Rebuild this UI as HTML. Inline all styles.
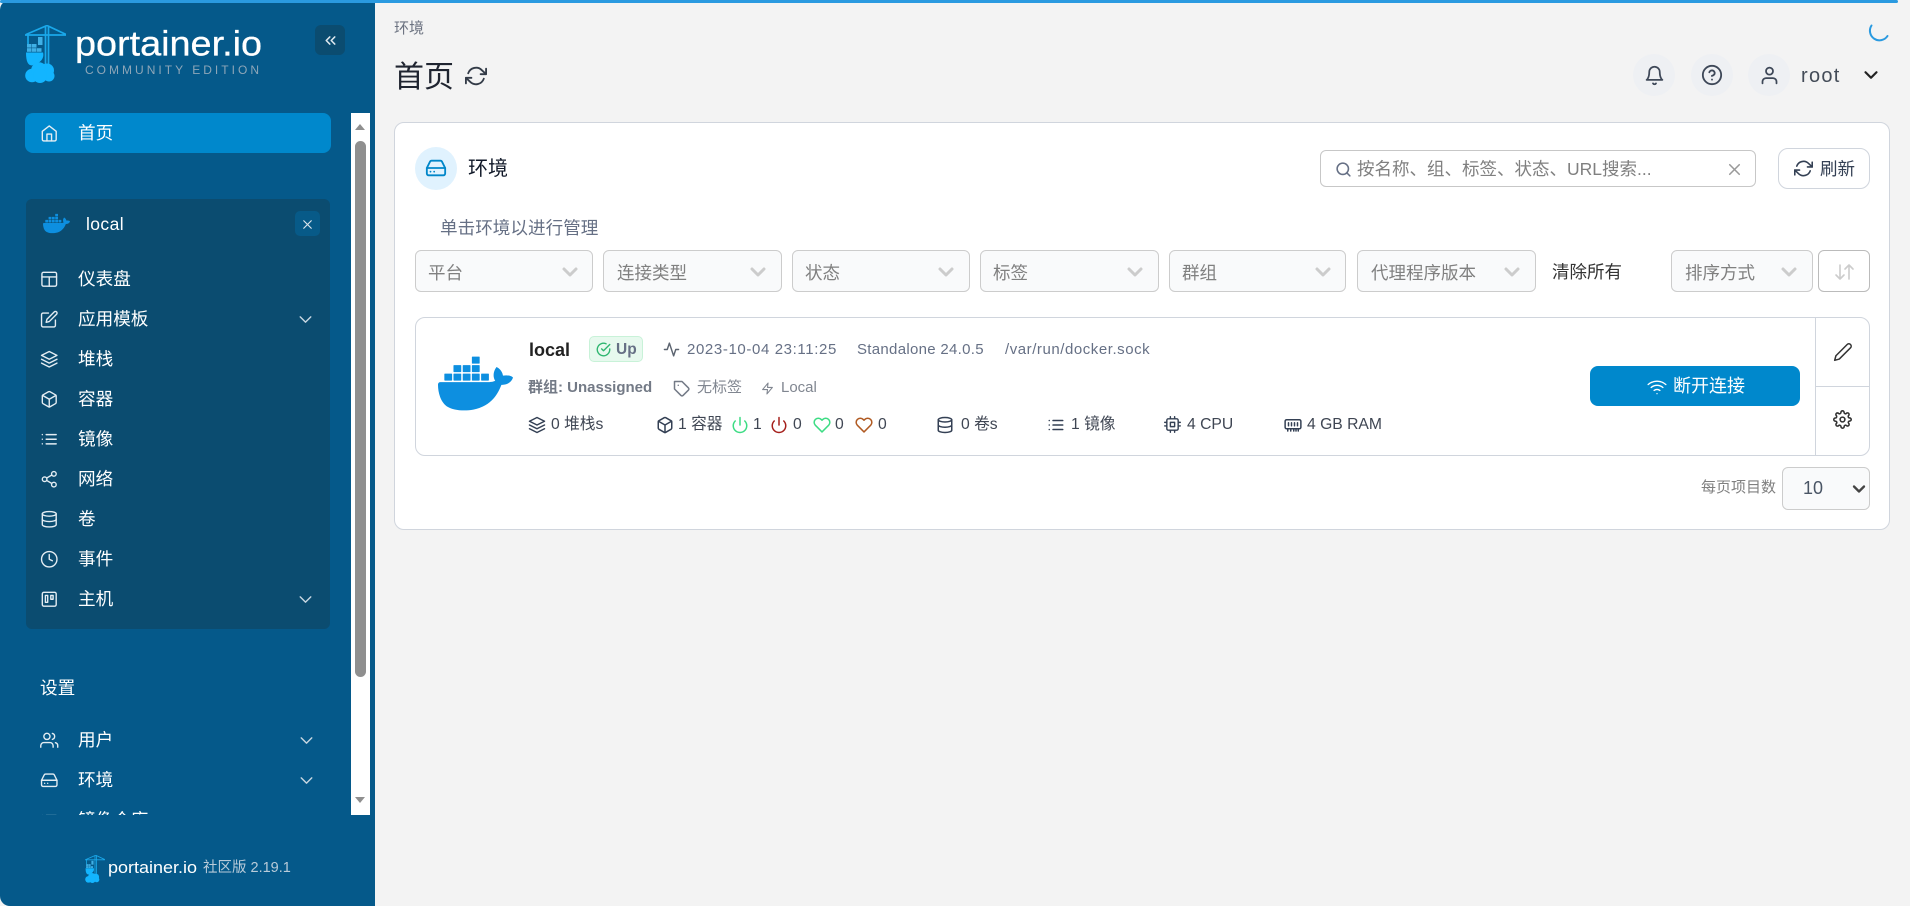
<!DOCTYPE html>
<html lang="zh"><head><meta charset="utf-8"><title>Portainer</title>
<style>
html,body{margin:0;padding:0;width:1910px;height:906px;overflow:hidden;background:#f3f3f3;font-family:"Liberation Sans","Noto Sans CJK SC",sans-serif;}
.t{position:absolute;line-height:24px;white-space:nowrap;}
.b{position:absolute;box-sizing:border-box;}
svg.i{position:absolute;fill:none;stroke:currentColor;stroke-width:2;stroke-linecap:round;stroke-linejoin:round;overflow:visible;}
.w{color:#fff;font-size:17.6px;left:78px;}
svg.n{color:#e4edf3;width:18.5px;height:18.500px;left:40px;margin-top:-1.250px;stroke-width:1.800;}
svg.c{color:#c6d5e0;width:21px;height:21px;left:295px;margin-top:-2.500px;stroke-width:1.700;}
.f{top:250px;height:42px;background:#f9fafb;border:1px solid #ccc;border-radius:6px;}
.ft{color:#808080;font-size:17.5px;top:261px;}
svg.fc{color:#ccc;width:24px;height:24px;top:260px;stroke-width:3;}
.g{color:#667085;font-size:15px;}
.d{color:#3f4653;font-size:15.7px;top:413px;}
svg.di{width:18px;height:18px;top:416px;color:#344054;stroke-width:2;}
.circ{top:54px;height:42px;width:42px;border-radius:50%;background:#eef0f3;}
</style></head><body>
<svg width="0" height="0" style="position:absolute">
<defs>
<symbol id="home" viewBox="0 0 24 24"><path d="M3 9.500l9-7 9 7V20a2 2 0 0 1-2 2H5a2 2 0 0 1-2-2z"/><path d="M9 22v-9h6v9"/></symbol>
<symbol id="layout" viewBox="0 0 24 24"><rect x="2.500" y="3" width="19" height="18" rx="2"/><path d="M2.500 9h19M12 9v12"/></symbol>
<symbol id="edit" viewBox="0 0 24 24"><path d="M11 4H4a2 2 0 0 0-2 2v14a2 2 0 0 0 2 2h14a2 2 0 0 0 2-2v-7"/><path d="M18.500 2.500a2.121 2.121 0 0 1 3 3L12 15l-4 1 1-4 9.500-9.500z"/></symbol>
<symbol id="layers" viewBox="0 0 24 24"><path d="M12 2L2 7l10 5 10-5z"/><path d="M2 17l10 5 10-5M2 12l10 5 10-5"/></symbol>
<symbol id="box" viewBox="0 0 24 24"><path d="M21 16V8a2 2 0 0 0-1-1.730l-7-4a2 2 0 0 0-2 0l-7 4A2 2 0 0 0 3 8v8a2 2 0 0 0 1 1.730l7 4a2 2 0 0 0 2 0l7-4A2 2 0 0 0 21 16z"/><path d="M3.270 6.960L12 12.010l8.730-5.050M12 22.080V12"/></symbol>
<symbol id="list" viewBox="0 0 24 24"><path d="M8 6h13M8 12h13M8 18h13M3 6h.01M3 12h.01M3 18h.01"/></symbol>
<symbol id="share" viewBox="0 0 24 24"><circle cx="18" cy="5" r="3"/><circle cx="6" cy="12" r="3"/><circle cx="18" cy="19" r="3"/><path d="M8.590 13.510l6.830 3.980M15.410 6.510l-6.820 3.980"/></symbol>
<symbol id="db" viewBox="0 0 24 24"><ellipse cx="12" cy="5" rx="9" ry="3"/><path d="M21 12c0 1.660-4 3-9 3s-9-1.340-9-3"/><path d="M3 5v14c0 1.660 4 3 9 3s9-1.340 9-3V5"/></symbol>
<symbol id="clock" viewBox="0 0 24 24"><circle cx="12" cy="12" r="10"/><path d="M12 6v6l4 2"/></symbol>
<symbol id="trello" viewBox="0 0 24 24"><rect x="3" y="3" width="18" height="18" rx="2"/><rect x="7" y="7" width="3" height="9"/><rect x="14" y="7" width="3" height="5"/></symbol>
<symbol id="users" viewBox="0 0 24 24"><path d="M17 21v-2a4 4 0 0 0-4-4H5a4 4 0 0 0-4 4v2"/><circle cx="9" cy="7" r="4"/><path d="M23 21v-2a4 4 0 0 0-3-3.870M16 3.130a4 4 0 0 1 0 7.750"/></symbol>
<symbol id="drive" viewBox="0 0 24 24"><path d="M22 12H2"/><path d="M5.450 5.110L2 12v6a2 2 0 0 0 2 2h16a2 2 0 0 0 2-2v-6l-3.450-6.890A2 2 0 0 0 16.760 4H7.240a2 2 0 0 0-1.790 1.110z"/><path d="M6 16h.01M10 16h.01"/></symbol>
<symbol id="chev" viewBox="0 0 24 24"><path d="M6 9l6 6 6-6"/></symbol>
<symbol id="chevl" viewBox="0 0 24 24"><path d="M11 17l-5-5 5-5M18 17l-5-5 5-5"/></symbol>
<symbol id="x" viewBox="0 0 24 24"><path d="M18 6L6 18M6 6l12 12"/></symbol>
<symbol id="refresh" viewBox="0 0 24 24"><path d="M23 4v6h-6M1 20v-6h6"/><path d="M3.510 9a9 9 0 0 1 14.850-3.360L23 10M1 14l4.640 4.360A9 9 0 0 0 20.490 15"/></symbol>
<symbol id="bell" viewBox="0 0 24 24"><path d="M18 8A6 6 0 0 0 6 8c0 7-3 9-3 9h18s-3-2-3-9"/><path d="M13.730 21a2 2 0 0 1-3.460 0"/></symbol>
<symbol id="help" viewBox="0 0 24 24"><circle cx="12" cy="12" r="10"/><path d="M9.090 9a3 3 0 0 1 5.830 1c0 2-3 3-3 3M12 17h.01"/></symbol>
<symbol id="user" viewBox="0 0 24 24"><path d="M20 21v-2a4 4 0 0 0-4-4H8a4 4 0 0 0-4 4v2"/><circle cx="12" cy="7" r="4"/></symbol>
<symbol id="search" viewBox="0 0 24 24"><circle cx="11" cy="11" r="8"/><path d="M21 21l-4.350-4.350"/></symbol>
<symbol id="check" viewBox="0 0 24 24"><path d="M22 11.080V12a10 10 0 1 1-5.930-9.140"/><path d="M22 4L12 14.010l-3-3"/></symbol>
<symbol id="pulse" viewBox="0 0 24 24"><path d="M22 12h-4l-3 9L9 3l-3 9H2"/></symbol>
<symbol id="tag" viewBox="0 0 24 24"><path d="M20.590 13.410l-7.170 7.170a2 2 0 0 1-2.830 0L2 12V2h10l8.590 8.590a2 2 0 0 1 0 2.820z"/><path d="M7 7h.01"/></symbol>
<symbol id="zap" viewBox="0 0 24 24"><path d="M13 2L3 14h9l-1 8 10-12h-9z"/></symbol>
<symbol id="power" viewBox="0 0 24 24"><path d="M18.360 6.640a9 9 0 1 1-12.730 0M12 2v10"/></symbol>
<symbol id="heart" viewBox="0 0 24 24"><path d="M20.840 4.610a5.500 5.500 0 0 0-7.780 0L12 5.670l-1.060-1.060a5.500 5.500 0 0 0-7.780 7.780l1.060 1.060L12 21.230l7.780-7.780 1.060-1.060a5.500 5.500 0 0 0 0-7.780z"/></symbol>
<symbol id="cpu" viewBox="0 0 24 24"><rect x="4" y="4" width="16" height="16" rx="2"/><rect x="9" y="9" width="6" height="6"/><path d="M9 1v3M15 1v3M9 20v3M15 20v3M20 9h3M20 14h3M1 9h3M1 14h3"/></symbol>
<symbol id="ram" viewBox="0 0 24 24"><rect x="1.500" y="5" width="21" height="12" rx="2"/><path d="M6 9v4M10 9v4M14 9v4M18 9v4M5 17v3M9 17v3M13 17v3M16 17v3M19 17v3"/></symbol>
<symbol id="wifi" viewBox="0 0 24 24"><path d="M5 12.550a11 11 0 0 1 14.080 0M1.420 9a16 16 0 0 1 21.160 0M8.530 16.110a6 6 0 0 1 6.950 0M12 20h.01"/></symbol>
<symbol id="pen" viewBox="0 0 24 24"><path d="M17 3a2.828 2.828 0 1 1 4 4L7.500 20.500 2 22l1.500-5.500L17 3z"/></symbol>
<symbol id="gear" viewBox="0 0 24 24"><circle cx="12" cy="12" r="3"/><path d="M19.400 15a1.650 1.650 0 0 0 .33 1.820l.06.06a2 2 0 0 1 0 2.830 2 2 0 0 1-2.830 0l-.06-.06a1.650 1.650 0 0 0-1.820-.33 1.650 1.650 0 0 0-1 1.510V21a2 2 0 0 1-2 2 2 2 0 0 1-2-2v-.09A1.650 1.650 0 0 0 9 19.400a1.650 1.650 0 0 0-1.820.33l-.06.06a2 2 0 0 1-2.830 0 2 2 0 0 1 0-2.830l.06-.06a1.650 1.650 0 0 0 .33-1.820 1.650 1.650 0 0 0-1.510-1H3a2 2 0 0 1-2-2 2 2 0 0 1 2-2h.09A1.650 1.650 0 0 0 4.600 9a1.650 1.650 0 0 0-.33-1.820l-.06-.06a2 2 0 0 1 0-2.830 2 2 0 0 1 2.830 0l.06.06a1.650 1.650 0 0 0 1.820.33H9a1.650 1.650 0 0 0 1-1.510V3a2 2 0 0 1 2-2 2 2 0 0 1 2 2v.09a1.650 1.650 0 0 0 1 1.510 1.650 1.650 0 0 0 1.820-.33l.06-.06a2 2 0 0 1 2.830 0 2 2 0 0 1 0 2.830l-.06.06a1.650 1.650 0 0 0-.33 1.820V9a1.650 1.650 0 0 0 1.510 1H21a2 2 0 0 1 2 2 2 2 0 0 1-2 2h-.09a1.650 1.650 0 0 0-1.510 1z"/></symbol>
<symbol id="docker" viewBox="0 0 24 24"><path fill="#0d8fe0" stroke="none" d="M13.983 11.078h2.119a.186.186 0 00.186-.185V9.006a.186.186 0 00-.186-.186h-2.119a.185.185 0 00-.185.185v1.888c0 .102.083.185.185.185m-2.954-5.430h2.118a.186.186 0 00.186-.186V3.574a.186.186 0 00-.186-.185h-2.118a.185.185 0 00-.185.185v1.888c0 .102.082.185.185.185m0 2.716h2.118a.187.187 0 00.186-.186V6.290a.186.186 0 00-.186-.185h-2.118a.185.185 0 00-.185.185v1.887c0 .102.082.185.185.186m-2.930 0h2.120a.186.186 0 00.184-.186V6.290a.185.185 0 00-.185-.185H8.100a.185.185 0 00-.185.185v1.887c0 .102.083.185.185.186m-2.964 0h2.119a.186.186 0 00.185-.186V6.290a.185.185 0 00-.185-.185H5.136a.186.186 0 00-.186.185v1.887c0 .102.084.185.186.186m5.893 2.715h2.118a.186.186 0 00.186-.185V9.006a.186.186 0 00-.186-.186h-2.118a.185.185 0 00-.185.185v1.888c0 .102.082.185.185.185m-2.930 0h2.120a.185.185 0 00.184-.185V9.006a.185.185 0 00-.184-.186h-2.120a.185.185 0 00-.184.185v1.888c0 .102.083.185.185.185m-2.964 0h2.119a.185.185 0 00.185-.185V9.006a.185.185 0 00-.184-.186h-2.120a.186.186 0 00-.186.186v1.887c0 .102.084.185.186.185m-2.920 0h2.120a.185.185 0 00.184-.185V9.006a.185.185 0 00-.184-.186h-2.120a.185.185 0 00-.184.185v1.888c0 .102.082.185.185.185M23.763 9.890c-.065-.051-.672-.510-1.954-.510-.338.001-.676.030-1.010.087-.248-1.700-1.653-2.530-1.716-2.566l-.344-.199-.226.327c-.284.438-.490.922-.612 1.430-.230.970-.090 1.882.403 2.661-.595.332-1.550.413-1.744.420H.751a.751.751 0 00-.750.748 11.376 11.376 0 00.692 4.062c.545 1.428 1.355 2.480 2.410 3.124 1.180.723 3.100 1.137 5.275 1.137.983.003 1.963-.086 2.930-.266a12.248 12.248 0 003.823-1.389c.980-.567 1.860-1.288 2.610-2.136 1.252-1.418 1.998-2.997 2.553-4.400h.221c1.372 0 2.215-.549 2.680-1.009.309-.293.550-.650.707-1.046l.098-.288Z"/></symbol>
<symbol id="logo" viewBox="25 25 41 58">
<g fill="none" stroke="#1aa8ea" stroke-width="1.700"><path d="M25 35h41M26 34.500L47 25.500L66 34.500M28 35v9M45.500 26v38M48.500 26v38"/></g>
<g fill="#3fb0e6"><rect x="27" y="44" width="4.500" height="3.600"/><rect x="32" y="44" width="4.500" height="3.600"/><rect x="27" y="48.200" width="4.500" height="3.600"/><rect x="32" y="48.200" width="4.500" height="3.600"/><rect x="37" y="48.200" width="4.500" height="3.600"/><rect x="38" y="37" width="4.500" height="8"/></g>
<path fill="#13b5ff" d="M26 52.500h17c1.500 5-2 10-7 11l-4 2c-4 0-6-4-6-13z"/>
<g fill="#13b5ff"><circle cx="32" cy="75.500" r="6.800"/><circle cx="39" cy="70" r="7.800"/><circle cx="47" cy="70.500" r="7"/><circle cx="49" cy="76" r="5.500"/><circle cx="40" cy="76" r="7"/></g>
</symbol>
</defs></svg>

<!-- sidebar -->
<div class="b" style="left:0;top:0;width:375px;height:906px;background:#05598a;border-radius:10px 0 0 10px"></div>
<div class="b" style="left:0;top:0;width:1898px;height:3px;background:#2a9ae0;border-radius:2px"></div>
<svg style="position:absolute;left:25px;top:25px;width:41px;height:58px"><use href="#logo"/></svg>
<svg style="position:absolute;left:0;top:0;width:375px;height:100px"><text x="75" y="55.500" font-family="Liberation Sans,sans-serif" font-size="35" fill="#fff" stroke="#fff" stroke-width=".3" textLength="187" lengthAdjust="spacingAndGlyphs">portainer.io</text><text x="85" y="74" font-family="Liberation Sans,sans-serif" font-size="12" fill="#8ea6b8" textLength="174">COMMUNITY EDITION</text></svg>
<div class="b" style="left:315px;top:25px;width:30px;height:30px;background:#0b4c70;border-radius:6px"></div>
<svg class="i" style="left:321.500px;top:31.500px;width:17px;height:17px;color:#dfe8ee;stroke-width:2.200"><use href="#chevl"/></svg>

<div class="b" style="left:25px;top:113px;width:306px;height:40px;background:#0088cc;border-radius:8px"></div>
<svg class="i n" style="top:125px"><use href="#home"/></svg><div class="t w" style="top:121px">首页</div>

<div class="b" style="left:26px;top:199px;width:304px;height:430px;background:#0b4c70;border-radius:6px"></div>
<svg style="position:absolute;left:43px;top:210px;width:27px;height:27px"><use href="#docker"/></svg>
<div class="t" style="left:86px;top:212px;color:#fff;font-size:17.5px;letter-spacing:.4px">local</div>
<div class="b" style="left:295px;top:211px;width:25px;height:25px;background:#075a88;border-radius:5px"></div>
<svg class="i" style="left:300px;top:216.500px;width:15px;height:15px;color:#dbe5ec;stroke-width:1.900"><use href="#x"/></svg>

<svg class="i n" style="top:271px"><use href="#layout"/></svg><div class="t w" style="top:267px">仪表盘</div>
<svg class="i n" style="top:311px"><use href="#edit"/></svg><div class="t w" style="top:307px">应用模板</div><svg class="i c" style="top:311px"><use href="#chev"/></svg>
<svg class="i n" style="top:351px"><use href="#layers"/></svg><div class="t w" style="top:347px">堆栈</div>
<svg class="i n" style="top:391px"><use href="#box"/></svg><div class="t w" style="top:387px">容器</div>
<svg class="i n" style="top:431px"><use href="#list"/></svg><div class="t w" style="top:427px">镜像</div>
<svg class="i n" style="top:471px"><use href="#share"/></svg><div class="t w" style="top:467px">网络</div>
<svg class="i n" style="top:511px"><use href="#db"/></svg><div class="t w" style="top:507px">卷</div>
<svg class="i n" style="top:551px"><use href="#clock"/></svg><div class="t w" style="top:547px">事件</div>
<svg class="i n" style="top:591px"><use href="#trello"/></svg><div class="t w" style="top:587px">主机</div><svg class="i c" style="top:591px"><use href="#chev"/></svg>

<div class="t w" style="left:40px;top:676px">设置</div>
<svg class="i n" style="top:732px"><use href="#users"/></svg><div class="t w" style="top:728px">用户</div><svg class="i c" style="left:296px;top:732px"><use href="#chev"/></svg>
<svg class="i n" style="top:772px"><use href="#drive"/></svg><div class="t w" style="top:768px">环境</div><svg class="i c" style="left:296px;top:772px"><use href="#chev"/></svg>
<div style="position:absolute;left:30px;top:800px;width:310px;height:15px;overflow:hidden"><div class="t w" style="left:48px;top:8px">镜像仓库</div><svg class="i n" style="left:10px;top:12px"><use href="#list"/></svg></div>

<div class="b" style="left:351px;top:113px;width:19px;height:702px;background:#fff"></div>
<div class="b" style="left:355px;top:141px;width:11px;height:536px;background:#8f8f8f;border-radius:6px"></div>
<div class="b" style="left:355px;top:124px;width:0;height:0;border-left:5.500px solid transparent;border-right:5.500px solid transparent;border-bottom:6px solid #8f8f8f"></div>
<div class="b" style="left:355px;top:797px;width:0;height:0;border-left:5.500px solid transparent;border-right:5.500px solid transparent;border-top:6px solid #8f8f8f"></div>

<svg style="position:absolute;left:85px;top:855px;width:20px;height:28px"><use href="#logo"/></svg>
<svg style="position:absolute;left:100px;top:850px;width:110px;height:40px"><text x="8" y="23" font-family="Liberation Sans,sans-serif" font-size="17" fill="#fff" textLength="89" lengthAdjust="spacingAndGlyphs">portainer.io</text></svg>
<div class="t" style="left:203px;top:856px;color:#b9cbd9;font-size:14.500px">社区版 2.19.1</div>

<!-- header -->
<div class="t" style="left:394px;top:17px;color:#6b7280;font-size:15px">环境</div>
<div class="t" style="left:394px;top:62px;color:#1f2430;font-size:30px;line-height:32px">首页</div>
<svg class="i" style="left:465px;top:65px;width:22px;height:22px;color:#333b47"><use href="#refresh"/></svg>

<svg style="position:absolute;left:1869px;top:22px;width:20px;height:20px;overflow:visible"><path d="M2.500 3.500A9.500 9.500 0 0 0 18.500 14" fill="none" stroke="#2a9ae0" stroke-width="2" stroke-linecap="round"/></svg>
<div class="b circ" style="left:1633px"></div><svg class="i" style="left:1644px;top:65px;width:21px;height:21px;color:#3e4858"><use href="#bell"/></svg>
<div class="b circ" style="left:1691px"></div><svg class="i" style="left:1701px;top:64px;width:22px;height:22px;color:#3e4858"><use href="#help"/></svg>
<div class="b circ" style="left:1748px"></div><svg class="i" style="left:1759px;top:65px;width:21px;height:21px;color:#3e4858"><use href="#user"/></svg>
<div class="t" style="left:1801px;top:64px;color:#444c58;font-size:20px;letter-spacing:1.300px">root</div>
<svg class="i" style="left:1860px;top:64px;width:22px;height:22px;color:#222;stroke-width:2.400"><use href="#chev"/></svg>

<!-- card -->
<div class="b" style="left:394px;top:122px;width:1496px;height:408px;background:#fff;border:1px solid #d0d5dd;border-radius:10px"></div>
<div class="b" style="left:415px;top:147px;width:42px;height:43px;background:#e0f2fe;border-radius:50%"></div>
<svg class="i" style="left:425px;top:157px;width:22px;height:22px;color:#0086c9"><use href="#drive"/></svg>
<div class="t" style="left:468px;top:157px;color:#101828;font-size:20px">环境</div>

<div class="b" style="left:1320px;top:150px;width:436px;height:37px;background:#fff;border:1px solid #c7c7c7;border-radius:6px"></div>
<svg class="i" style="left:1334.500px;top:160.500px;width:17px;height:17px;color:#667085;stroke-width:2.200"><use href="#search"/></svg>
<div class="t" style="left:1357px;top:157px;color:#808080;font-size:17.500px">按名称、组、标签、状态、URL搜索...</div>
<svg class="i" style="left:1725px;top:159.500px;width:19px;height:19px;color:#9a9a9a;stroke-width:2"><use href="#x"/></svg>

<div class="b" style="left:1778px;top:148px;width:92px;height:41px;background:#fff;border:1px solid #d0d5dd;border-radius:10px"></div>
<svg class="i" style="left:1793.500px;top:158.500px;width:19px;height:19px;color:#344054"><use href="#refresh"/></svg>
<div class="t" style="left:1820px;top:157px;color:#344054;font-size:17.500px">刷新</div>

<div class="t" style="left:440px;top:216px;color:#667085;font-size:17.600px">单击环境以进行管理</div>

<!-- filters -->
<div class="b f" style="left:415px;width:178px"></div><div class="t ft" style="left:428px">平台</div><svg class="i fc" style="left:557.500px"><use href="#chev"/></svg>
<div class="b f" style="left:603px;width:179px"></div><div class="t ft" style="left:617px">连接类型</div><svg class="i fc" style="left:746px"><use href="#chev"/></svg>
<div class="b f" style="left:792px;width:178px"></div><div class="t ft" style="left:805px">状态</div><svg class="i fc" style="left:934px"><use href="#chev"/></svg>
<div class="b f" style="left:980px;width:179px"></div><div class="t ft" style="left:993px">标签</div><svg class="i fc" style="left:1123px"><use href="#chev"/></svg>
<div class="b f" style="left:1169px;width:177px"></div><div class="t ft" style="left:1182px">群组</div><svg class="i fc" style="left:1311px"><use href="#chev"/></svg>
<div class="b f" style="left:1357px;width:179px"></div><div class="t ft" style="left:1371px">代理程序版本</div><svg class="i fc" style="left:1500px"><use href="#chev"/></svg>
<div class="t" style="left:1552px;top:260px;color:#333;font-size:17.500px">清除所有</div>
<div class="b f" style="left:1671px;width:142px"></div><div class="t ft" style="left:1685px">排序方式</div><svg class="i fc" style="left:1777px"><use href="#chev"/></svg>
<div class="b f" style="left:1818px;width:52px;background:#fff;border-color:#bbb"></div>
<svg style="position:absolute;left:1834px;top:262px;width:22px;height:20px" fill="none" stroke="#ccc" stroke-width="1.600" stroke-linecap="round" stroke-linejoin="round"><path d="M6 3v14M2 13l4 4 4-4M15 17V3M11 7l4-4 4 4"/></svg>

<!-- item -->
<div class="b" style="left:415px;top:317px;width:1455px;height:139px;background:#fff;border:1px solid #d0d5dd;border-radius:10px"></div>
<div class="b" style="left:1815px;top:317px;width:1px;height:139px;background:#d0d5dd"></div>
<div class="b" style="left:1815px;top:386px;width:54px;height:1px;background:#d0d5dd"></div>
<svg style="position:absolute;left:438px;top:346px;width:75px;height:75px"><use href="#docker"/></svg>
<div class="t" style="left:529px;top:338px;color:#222;font-size:18px;font-weight:700">local</div>
<div class="b" style="left:589px;top:336px;width:54px;height:26px;background:#e7f9ee;border:1px solid #c8f2d8;border-radius:5px"></div>
<svg class="i" style="left:596px;top:342px;width:15px;height:15px;color:#2fb670;stroke-width:2.200"><use href="#check"/></svg>
<div class="t" style="left:616px;top:338px;color:#667085;font-size:15.500px;font-weight:700">Up</div>
<svg class="i" style="left:663px;top:340.500px;width:17px;height:17px;color:#5c6470"><use href="#pulse"/></svg>
<div class="t g" style="left:687px;top:338px;letter-spacing:.62px">2023-10-04 23:11:25</div>
<div class="t g" style="left:857px;top:338px;letter-spacing:.3px">Standalone 24.0.5</div>
<div class="t g" style="left:1005px;top:338px;letter-spacing:.55px">/var/run/docker.sock</div>

<div class="t g" style="left:528px;top:376px;font-weight:700;color:#737a86">群组: Unassigned</div>
<svg class="i" style="left:673px;top:380px;width:18px;height:18px;color:#737a86"><use href="#tag"/></svg>
<div class="t g" style="left:697px;top:376px;color:#808690">无标签</div>
<svg class="i" style="left:761px;top:382px;width:13px;height:13px;color:#808690"><use href="#zap"/></svg>
<div class="t g" style="left:781px;top:376px;color:#808690">Local</div>

<svg class="i di" style="left:527.500px"><use href="#layers"/></svg><div class="t d" style="left:551px">0 堆栈s</div>
<svg class="i di" style="left:656px"><use href="#box"/></svg><div class="t d" style="left:678px">1 容器</div>
<svg class="i di" style="left:731px;color:#3ddc84"><use href="#power"/></svg><div class="t d" style="left:753px">1</div>
<svg class="i di" style="left:770px;color:#a5201c"><use href="#power"/></svg><div class="t d" style="left:793px">0</div>
<svg class="i di" style="left:813px;color:#3ddc84"><use href="#heart"/></svg><div class="t d" style="left:835px">0</div>
<svg class="i di" style="left:855px;color:#b05a22"><use href="#heart"/></svg><div class="t d" style="left:878px">0</div>
<svg class="i di" style="left:936px"><use href="#db"/></svg><div class="t d" style="left:961px">0 卷s</div>
<svg class="i di" style="left:1047px"><use href="#list"/></svg><div class="t d" style="left:1071px">1 镜像</div>
<svg class="i di" style="left:1164px;top:416px;width:17px;height:17px"><use href="#cpu"/></svg><div class="t d" style="left:1187px">4 CPU</div>
<svg class="i di" style="left:1284px"><use href="#ram"/></svg><div class="t d" style="left:1307px">4 GB RAM</div>

<div class="b" style="left:1590px;top:366px;width:210px;height:40px;background:#0088cc;border-radius:8px"></div>
<svg class="i" style="left:1647px;top:377px;width:20px;height:20px;color:#fff;stroke-width:1.600"><use href="#wifi"/></svg>
<div class="t" style="left:1673px;top:374px;color:#fff;font-size:18px">断开连接</div>
<svg class="i" style="left:1833px;top:342px;width:20px;height:20px;color:#333;stroke-width:1.800"><use href="#pen"/></svg>
<svg class="i" style="left:1833px;top:410px;width:19px;height:19px;color:#333"><use href="#gear"/></svg>

<div class="t" style="left:1701px;top:476px;color:#808080;font-size:15px">每页项目数</div>
<div class="b" style="left:1782px;top:467px;width:88px;height:43px;background:#f9fafb;border:1px solid #ccc;border-radius:6px"></div>
<div class="t" style="left:1803px;top:476px;color:#4a5565;font-size:18px">10</div>
<svg class="i" style="left:1848.500px;top:479px;width:20px;height:20px;color:#444;stroke-width:2.800"><use href="#chev"/></svg>
</body></html>
